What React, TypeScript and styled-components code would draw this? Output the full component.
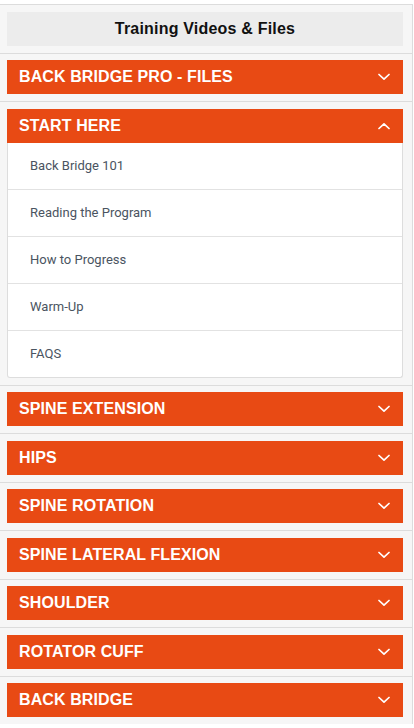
import React, { useState } from 'react';
import styled, { createGlobalStyle } from 'styled-components';

const GlobalStyle = createGlobalStyle`
  html, body {
    margin: 0;
    padding: 0;
    background: #ffffff;
  }
  * {
    box-sizing: border-box;
  }
`;

const sections: { title: string; items?: string[] }[] = [
  { title: 'BACK BRIDGE PRO - FILES' },
  {
    title: 'START HERE',
    items: [
      'Back Bridge 101',
      'Reading the Program',
      'How to Progress',
      'Warm-Up',
      'FAQS',
    ],
  },
  { title: 'SPINE EXTENSION' },
  { title: 'HIPS' },
  { title: 'SPINE ROTATION' },
  { title: 'SPINE LATERAL FLEXION' },
  { title: 'SHOULDER' },
  { title: 'ROTATOR CUFF' },
  { title: 'BACK BRIDGE' },
];

function Chevron({ up }: { up?: boolean }) {
  return (
    <ChevronIcon $up={up} width="12" height="8" viewBox="0 0 12 8">
      <polyline
        points="1,1.5 6,6.2 11,1.5"
        fill="none"
        stroke="#ffffff"
        strokeWidth="1.7"
        strokeLinecap="round"
        strokeLinejoin="round"
      />
    </ChevronIcon>
  );
}

export default function App() {
  const [open, setOpen] = useState<string | null>('START HERE');

  return (
    <Page>
      <GlobalStyle />
      <Panel>
        <Section>
          <PanelTitle>Training Videos &amp; Files</PanelTitle>
        </Section>
        {sections.map((section) => {
          const isOpen = open === section.title;
          return (
            <Section key={section.title}>
              <Bar onClick={() => setOpen(isOpen ? null : section.title)}>
                <BarTitle>{section.title}</BarTitle>
                <Chevron up={isOpen} />
              </Bar>
              {isOpen && section.items && (
                <ItemList>
                  {section.items.map((item) => (
                    <Item key={item}>{item}</Item>
                  ))}
                </ItemList>
              )}
            </Section>
          );
        })}
      </Panel>
    </Page>
  );
}

const Page = styled.div`
  padding-top: 4px;
  width: 414px;
`;

const Panel = styled.div`
  width: 413px;
  background: #f6f6f6;
  border-top: 1px solid #dcdcdc;
  border-right: 1px solid #dcdcdc;
`;

const Section = styled.div`
  padding: 6.5px 9px 7px 7px;

  & + & {
    border-top: 1px solid #dcdcdc;
  }
`;

const PanelTitle = styled.div`
  height: 34px;
  background: #ececec;
  display: flex;
  align-items: center;
  justify-content: center;
  font-family: 'Liberation Sans', Arial, sans-serif;
  font-weight: 700;
  font-size: 16px;
  letter-spacing: 0.2px;
  color: #111111;
`;

const Bar = styled.div`
  height: 34px;
  background: #e84a14;
  display: flex;
  align-items: center;
  justify-content: space-between;
  padding: 0 13px 0 12px;
  cursor: pointer;
`;

const BarTitle = styled.span`
  font-family: 'Liberation Sans', Arial, sans-serif;
  font-weight: 700;
  font-size: 16px;
  letter-spacing: 0.1px;
  color: #ffffff;
`;

const ChevronIcon = styled.svg<{ $up?: boolean }>`
  display: block;
  transform: ${(p) => (p.$up ? 'rotate(180deg)' : 'none')};
`;

const ItemList = styled.div`
  background: #ffffff;
  border: 1px solid #dddddd;
  border-top: none;
  border-radius: 0 0 3px 3px;
`;

const Item = styled.div`
  height: 47px;
  display: flex;
  align-items: center;
  padding-left: 22px;
  font-family: Roboto, 'Liberation Sans', Arial, sans-serif;
  font-size: 13px;
  color: #4a5461;
  border-bottom: 1px solid #e2e2e2;

  &:last-child {
    border-bottom: none;
    height: 46px;
  }
`;
